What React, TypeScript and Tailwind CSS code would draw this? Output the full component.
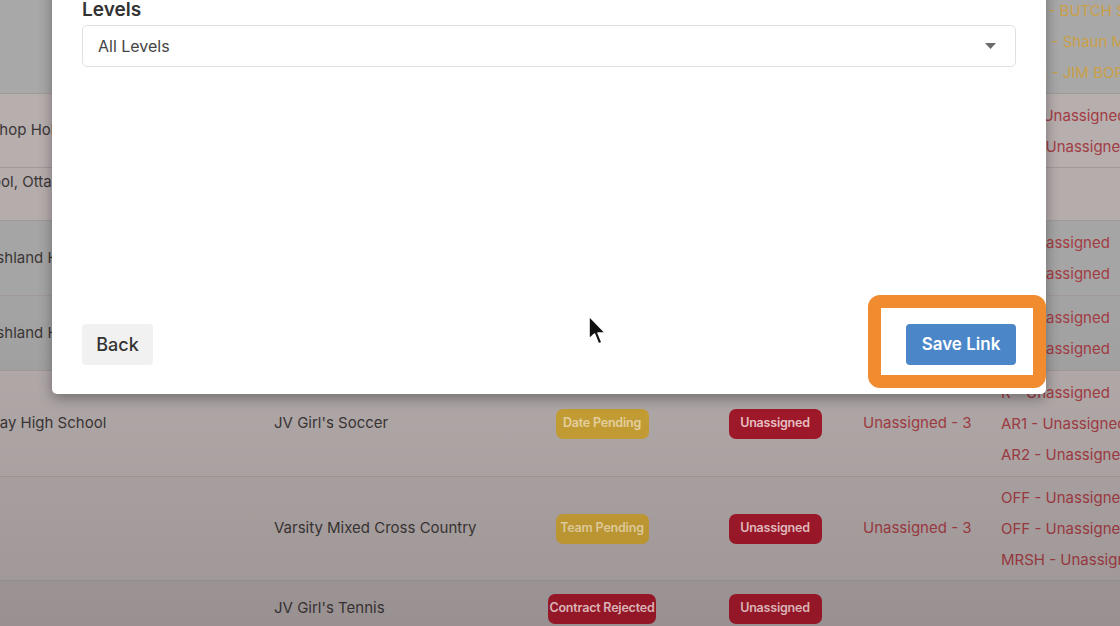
import React from 'react';

type Row = {
  h: number;
  bg: string;
  school?: string;
  schoolIndent?: string;
  schoolTop?: boolean;
  sport?: string;
  status?: { label: string; tone: 'gold' | 'red' };
  assigned?: boolean;
  count?: string;
  officials?: string[];
  officialsTone?: 'gold' | 'red';
};

const rows: Row[] = [
  {
    h: 104,
    bg: 'bg-[#a9a8a8]',
    officials: ['REFR1 - BUTCH SMITH', 'REFR2 - Shaun Miller', 'REFR3 - JIM BORDEN'],
    officialsTone: 'gold',
  },
  {
    h: 74,
    bg: 'bg-[#b7aeae]',
    school: 'Bishop Holy Cross',
    schoolIndent: 'pl-[20px]',
    officials: ['AR1 - Unassigned', 'AR2 - Unassigned'],
  },
  {
    h: 53,
    bg: 'bg-[#b5acac]',
    school: 'School, Ottawa',
    schoolIndent: 'pl-[7px]',
    schoolTop: true,
  },
  {
    h: 75,
    bg: 'bg-[#a6a5a5]',
    school: 'Ashland High',
    schoolIndent: 'pl-[28px]',
    officials: ['R - Unassigned', 'R - Unassigned'],
  },
  {
    h: 75,
    bg: 'bg-[#a4a3a3]',
    school: 'Ashland High',
    schoolIndent: 'pl-[28px]',
    officials: ['R - Unassigned', 'R - Unassigned'],
  },
  {
    h: 106,
    bg: 'bg-[#b3aaaa]',
    school: 'Ottaway High School',
    sport: "JV Girl's Soccer",
    status: { label: 'Date Pending', tone: 'gold' },
    assigned: true,
    count: 'Unassigned - 3',
    officials: ['R - Unassigned', 'AR1 - Unassigned', 'AR2 - Unassigned'],
  },
  {
    h: 104,
    bg: 'bg-[#b0a7a7]',
    sport: 'Varsity Mixed Cross Country',
    status: { label: 'Team Pending', tone: 'gold' },
    assigned: true,
    count: 'Unassigned - 3',
    officials: ['OFF - Unassigned', 'OFF - Unassigned', 'MRSH - Unassigned'],
  },
  {
    h: 56,
    bg: 'bg-[#aaa1a1]',
    sport: "JV Girl's Tennis",
    status: { label: 'Contract Rejected', tone: 'red' },
    assigned: true,
  },
];

const Badge: React.FC<{ label: string; tone: 'gold' | 'red' }> = ({ label, tone }) => (
  <span
    className={`inline-flex h-[30px] min-w-[93px] items-center justify-center whitespace-nowrap rounded-[7px] px-[3px] text-[12.5px] font-semibold tracking-[-0.2px] ${
      tone === 'gold' ? 'bg-[#c8a035] text-[#ecd7a3]' : 'bg-[#a3192b] text-[#efc5c9]'
    }`}
  >
    {label}
  </span>
);

const TableRow: React.FC<{ row: Row; first: boolean }> = ({ row, first }) => (
  <div
    className={`flex ${row.schoolTop ? 'items-start pt-[3px]' : 'items-center'} ${row.bg} ${
      first ? '' : 'border-t border-[#a29a9a]'
    }`}
    style={{ height: row.h }}
  >
    <div
      className={`w-[316px] shrink-0 overflow-hidden whitespace-nowrap text-[15px] text-[#3a3636] ${
        row.schoolIndent ?? ''
      }`}
    >
      {row.school}
    </div>
    <div className="w-[274px] shrink-0 text-[15px] text-[#3a3636]">{row.sport}</div>
    <div className="flex w-[108px] shrink-0 justify-center">
      {row.status && <Badge label={row.status.label} tone={row.status.tone} />}
    </div>
    <div className="ml-[65px] flex w-[108px] shrink-0 justify-center">
      {row.assigned && <Badge label="Unassigned" tone="red" />}
    </div>
    <div className="ml-[34px] w-[138px] shrink-0 text-[15px] text-[#a23c44]">{row.count}</div>
    <div
      className={`flex flex-1 flex-col whitespace-nowrap text-[15px] leading-[31px] ${
        row.officialsTone === 'gold' ? 'text-[#c9a047]' : 'text-[#a23c44]'
      }`}
    >
      {row.officials?.map((o, i) => (
        <span key={i}>{o}</span>
      ))}
    </div>
  </div>
);

export default function App() {
  return (
    <div
      className="relative h-[626px] w-[1120px] overflow-hidden bg-[#aaa1a1]"
      style={{ fontFamily: 'Inter, "Noto Sans", sans-serif' }}
    >
      {/* table behind the dialog */}
      <div className="ml-[-42px] mt-[-11px] w-[1162px]">
        {rows.map((row, i) => (
          <TableRow key={i} row={row} first={i === 0} />
        ))}
      </div>

      {/* backdrop shading */}
      <div className="pointer-events-none absolute inset-0 bg-linear-to-b from-transparent via-transparent to-black/10" />

      {/* dialog */}
      <div className="absolute left-[52px] top-[-20px] flex h-[414px] w-[994px] flex-col rounded-[5px] bg-white px-[30px] pb-[29px] pt-[18px] shadow-[0_4px_14px_rgba(0,0,0,0.35)]">
        <label className="text-[19px] font-semibold leading-[24px] text-[#333]">Levels</label>
        <div className="mt-[3px] flex h-[42px] items-center justify-between rounded-[5px] border border-[#e0e0e0] pl-[15px] pr-[19px]">
          <span className="text-[16px] text-[#444]">All Levels</span>
          <svg width="11" height="6" viewBox="0 0 11 6">
            <path d="M0 0 L11 0 L5.5 6 Z" fill="#6b6b6b" />
          </svg>
        </div>
        <div className="flex-1" />
        <div className="flex items-center justify-between">
          <button className="h-[41px] w-[71px] rounded-[4px] bg-[#f1f1f1] text-[18px] font-medium text-[#333]">
            Back
          </button>
          <button className="h-[41px] w-[110px] rounded-[4px] bg-[#4a86c8] text-[17px] font-semibold text-white">
            Save Link
          </button>
        </div>
      </div>

      {/* orange highlight around Save Link */}
      <div className="pointer-events-none absolute left-[868px] top-[295px] h-[93px] w-[178px] rounded-[12px] border-[13px] border-[#f08b2f]" />

      {/* mouse pointer */}
      <svg
        className="pointer-events-none absolute left-[586px] top-[314px]"
        width="22"
        height="34"
        viewBox="0 0 22 34"
      >
        <path
          d="M3 2 L3 25 L8.5 20 L12.5 30 L16 28.5 L12 19 L19.5 19 Z"
          fill="#111"
          stroke="#fff"
          strokeWidth="1.6"
          strokeLinejoin="round"
        />
      </svg>
    </div>
  );
}
